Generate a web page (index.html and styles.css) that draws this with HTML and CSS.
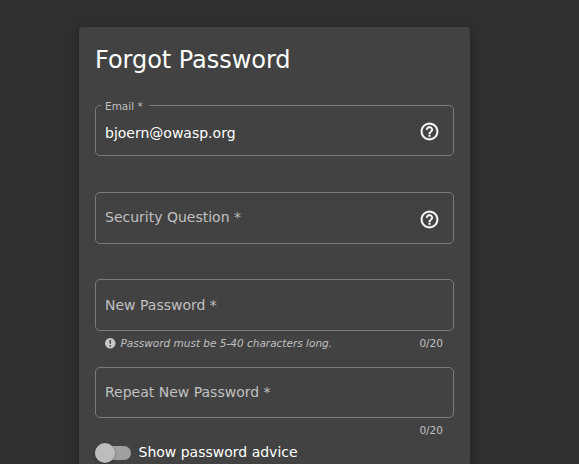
FILE: index.html
```html
<!DOCTYPE html>
<html lang="en">
<head>
<meta charset="utf-8">
<title>Forgot Password</title>
<link rel="stylesheet" href="styles.css">
</head>
<body>
<main class="card">
  <h1>Forgot Password</h1>
  <div class="field email">
    <span class="float-label">Email *</span>
    <span class="value">bjoern@owasp.org</span>
    <svg class="help" viewBox="0 0 24 24"><path d="M11 18h2v-2h-2v2zm1-16C6.48 2 2 6.48 2 12s4.48 10 10 10 10-4.48 10-10S17.52 2 12 2zm0 18c-4.41 0-8-3.59-8-8s3.59-8 8-8 8 3.59 8 8-3.59 8-8 8zm0-14c-2.21 0-4 1.79-4 4h2c0-1.1.9-2 2-2s2 .9 2 2c0 2-3 1.75-3 5h2c0-2.25 3-2.5 3-5 0-2.21-1.79-4-4-4z"/></svg>
  </div>
  <div class="hint"></div>
  <div class="field tall">
    <span class="label raised">Security Question *</span>
    <svg class="help" viewBox="0 0 24 24"><path d="M11 18h2v-2h-2v2zm1-16C6.48 2 2 6.48 2 12s4.48 10 10 10 10-4.48 10-10S17.52 2 12 2zm0 18c-4.41 0-8-3.59-8-8s3.59-8 8-8 8 3.59 8 8-3.59 8-8 8zm0-14c-2.21 0-4 1.79-4 4h2c0-1.1.9-2 2-2s2 .9 2 2c0 2-3 1.75-3 5h2c0-2.25 3-2.5 3-5 0-2.21-1.79-4-4-4z"/></svg>
  </div>
  <div class="hint short"></div>
  <div class="field tall">
    <span class="label">New Password *</span>
  </div>
  <div class="hint">
    <svg class="info" viewBox="0 0 10 10"><circle cx="5" cy="5" r="5"/><path d="M4.2 1.8h1.6l-.3 4h-1zM4.3 6.6h1.4v1.4H4.3z"/></svg>
    <em>Password must be 5-40 characters long.</em>
    <span class="count">0/20</span>
  </div>
  <div class="field">
    <span class="label raised">Repeat New Password *</span>
  </div>
  <div class="hint last"><span class="count">0/20</span></div>
  <div class="toggle">
    <span class="track"><span class="thumb"></span></span>
    <span>Show password advice</span>
  </div>
</main>
</body>
</html>
```
FILE: styles.css
```css
* { box-sizing: border-box; }
html { height: 100%; overflow: hidden; background: #303030; }
body {
  margin: 0;
  height: 464px;
  overflow: hidden;
  font: 14px/20px "DejaVu Sans", sans-serif;
  color: #fff;
}
.card {
  width: 391px;
  height: 437px;
  margin: 27px 0 0 79px;
  padding: 17px 16px 0;
  border-radius: 4px 4px 0 0;
  background: #424242;
  box-shadow: 0 3px 5px -1px rgba(0,0,0,.2), 0 6px 10px rgba(0,0,0,.14), 0 1px 18px rgba(0,0,0,.12);
}
h1 { margin: 0 0 29px; font-size: 24px; line-height: 32px; font-weight: 400; letter-spacing: -.04px; }
.field {
  position: relative;
  display: flex;
  align-items: center;
  height: 51px;
  padding: 0 13px 0 9px;
  border: 1px solid #7b7b7b;
  border-radius: 5px;
}
.tall { height: 52px; }
.label { color: #c0c0c0; }
.raised { padding-bottom: 2px; }
.value { padding-top: 4px; }
.help { width: 21px; height: 21px; margin-left: auto; fill: #fff; stroke: #fff; stroke-width: .3px; }
.email .help { margin-top: 2px; }
.tall .help { margin-top: 3px; }
.float-label {
  position: absolute;
  left: 5px;
  top: -7px;
  padding: 0 6px 0 4px;
  background: #424242;
  color: #c0c0c0;
  font-size: 10.5px;
  line-height: 14px;
}
.hint {
  display: flex;
  align-items: flex-start;
  height: 36px;
  padding: 5px 11px 0 10px;
  color: #c0c0c0;
  font-size: 10.5px;
  line-height: 14px;
}
.short { height: 35px; }
.last { height: 24px; }
.info { width: 10.5px; height: 10.5px; margin: 2px 5px 0 0; fill: #c8c8c8; }
.info path { fill: #424242; }
.count { margin-left: auto; }
.toggle { display: flex; align-items: center; gap: 7.5px; height: 20px; }
.track {
  position: relative;
  width: 36px;
  height: 14px;
  margin-top: 2px;
  border-radius: 7px;
  background: #a0a0a0;
}
.thumb {
  position: absolute;
  left: 0;
  top: -3px;
  width: 20px;
  height: 20px;
  border-radius: 50%;
  background: #bdbdbd;
  box-shadow: 0 1px 3px rgba(0,0,0,.3);
}
```
